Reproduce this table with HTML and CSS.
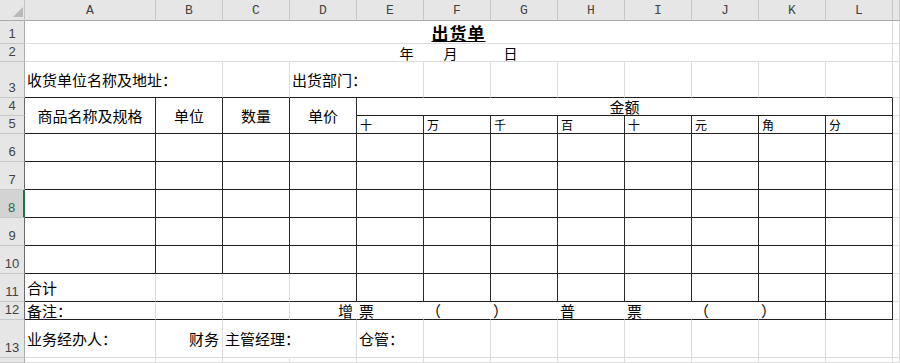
FILE: index.html
```html
<!DOCTYPE html>
<html lang="zh-CN">
<head>
<meta charset="utf-8">
<title>出货单</title>
<link rel="stylesheet" href="styles.css">
</head>
<body>
<div class="sheet">
  <!-- column headers -->
  <div class="c ch corner"><span class="tri"></span></div>
  <div class="c ch">A</div><div class="c ch">B</div><div class="c ch">C</div><div class="c ch">D</div>
  <div class="c ch">E</div><div class="c ch">F</div><div class="c ch">G</div><div class="c ch">H</div>
  <div class="c ch">I</div><div class="c ch">J</div><div class="c ch">K</div><div class="c ch">L</div>
  <div class="c ch"></div>

  <!-- row 1 -->
  <div class="c rh">1</div>
  <div class="c s12 ctr title"><span>出货单</span></div>
  <div class="c"></div>

  <!-- row 2 -->
  <div class="c rh">2</div>
  <div class="c s12 ctr date"><span>年</span><span class="gap1">月</span><span class="gap2">日</span></div>
  <div class="c"></div>

  <!-- row 3 -->
  <div class="c rh">3</div>
  <div class="c s2 b">收货单位名称及地址：</div>
  <div class="c b"></div>
  <div class="c s2 b">出货部门：</div>
  <div class="c b"></div><div class="c b"></div><div class="c b"></div><div class="c b"></div>
  <div class="c b"></div><div class="c b"></div><div class="c b"></div>
  <div class="c"></div>

  <!-- row 4 -->
  <div class="c rh tl">4</div>
  <div class="c rs2 r b ctr">商品名称及规格</div>
  <div class="c rs2 r b ctr">单位</div>
  <div class="c rs2 r b ctr">数量</div>
  <div class="c rs2 r b ctr">单价</div>
  <div class="c s8 r b ctr">金额</div>
  <div class="c"></div>

  <!-- row 5 -->
  <div class="c rh tl">5</div>
  <div class="c r b sm">十</div><div class="c r b sm">万</div><div class="c r b sm">千</div><div class="c r b sm">百</div>
  <div class="c r b sm">十</div><div class="c r b sm">元</div><div class="c r b sm">角</div><div class="c r b sm">分</div>
  <div class="c"></div>

  <!-- rows 6-10 -->
  <div class="c rh tl">6</div>
  <div class="c r b"></div><div class="c r b"></div><div class="c r b"></div><div class="c r b"></div>
  <div class="c r b"></div><div class="c r b"></div><div class="c r b"></div><div class="c r b"></div>
  <div class="c r b"></div><div class="c r b"></div><div class="c r b"></div><div class="c r b"></div>
  <div class="c"></div>

  <div class="c rh tl">7</div>
  <div class="c r b"></div><div class="c r b"></div><div class="c r b"></div><div class="c r b"></div>
  <div class="c r b"></div><div class="c r b"></div><div class="c r b"></div><div class="c r b"></div>
  <div class="c r b"></div><div class="c r b"></div><div class="c r b"></div><div class="c r b"></div>
  <div class="c"></div>

  <div class="c rh sel">8</div>
  <div class="c r b"></div><div class="c r b"></div><div class="c r b"></div><div class="c r b"></div>
  <div class="c r b"></div><div class="c r b"></div><div class="c r b"></div><div class="c r b"></div>
  <div class="c r b"></div><div class="c r b"></div><div class="c r b"></div><div class="c r b"></div>
  <div class="c"></div>

  <div class="c rh tl">9</div>
  <div class="c r b"></div><div class="c r b"></div><div class="c r b"></div><div class="c r b"></div>
  <div class="c r b"></div><div class="c r b"></div><div class="c r b"></div><div class="c r b"></div>
  <div class="c r b"></div><div class="c r b"></div><div class="c r b"></div><div class="c r b"></div>
  <div class="c"></div>

  <div class="c rh tl">10</div>
  <div class="c r b"></div><div class="c r b"></div><div class="c r b"></div><div class="c r b"></div>
  <div class="c r b"></div><div class="c r b"></div><div class="c r b"></div><div class="c r b"></div>
  <div class="c r b"></div><div class="c r b"></div><div class="c r b"></div><div class="c r b"></div>
  <div class="c"></div>

  <!-- row 11 -->
  <div class="c rh tl">11</div>
  <div class="c b">合计</div><div class="c b"></div><div class="c b"></div><div class="c r b"></div>
  <div class="c r b"></div><div class="c r b"></div><div class="c r b"></div><div class="c r b"></div>
  <div class="c r b"></div><div class="c r b"></div><div class="c r b"></div><div class="c r b"></div>
  <div class="c"></div>

  <!-- row 12 -->
  <div class="c rh tl">12</div>
  <div class="c b">备注：</div><div class="c b"></div><div class="c b"></div>
  <div class="c b nr end">增</div>
  <div class="c b nr">票</div>
  <div class="c b nr">（</div>
  <div class="c b nr">）</div>
  <div class="c b nr">普</div>
  <div class="c b nr">票</div>
  <div class="c b nr">（</div>
  <div class="c b r">）</div>
  <div class="c b r"></div>
  <div class="c"></div>

  <!-- row 13 -->
  <div class="c rh">13</div>
  <div class="c">业务经办人：</div>
  <div class="c end">财务</div>
  <div class="c nr">主管经理：</div>
  <div class="c"></div>
  <div class="c">仓管：</div>
  <div class="c"></div><div class="c"></div><div class="c"></div><div class="c"></div>
  <div class="c"></div><div class="c"></div><div class="c"></div>
  <div class="c"></div>

  <!-- row 14 (partial) -->
  <div class="c rh"></div>
  <div class="c"></div><div class="c"></div><div class="c"></div><div class="c"></div>
  <div class="c"></div><div class="c"></div><div class="c"></div><div class="c"></div>
  <div class="c"></div><div class="c"></div><div class="c"></div><div class="c"></div>
  <div class="c"></div>
</div>
</body>
</html>
```

FILE: styles.css
```css
* { box-sizing: border-box; }

html, body {
  margin: 0;
  padding: 0;
  background: #fff;
  overflow: hidden;
}

.sheet {
  display: grid;
  grid-template-columns: 25px 131px repeat(11, 67px) 1fr;
  grid-template-rows: 21px 23px 18px 36px 18px 18px repeat(6, 28px) 18px 38px 1fr;
  width: 900px;
  height: 363px;
  font-family: "Noto Sans CJK SC", "Liberation Sans", sans-serif;
  font-size: 15px;
  color: #000;
}

.c {
  display: flex;
  align-items: center;
  min-width: 0;
  padding: 0 2px;
  white-space: nowrap;
  line-height: 1;
  border-right: 1px solid #dcdcdc;
  border-bottom: 1px solid #dcdcdc;
}

/* headers */
.ch {
  justify-content: center;
  background: #e6e6e6;
  border-right: 1px solid #c8c8c8;
  border-bottom: 1px solid #ababab;
  font-family: "Liberation Mono", monospace;
  font-size: 13px;
  color: #444;
}

.corner {
  justify-content: flex-end;
  align-items: flex-end;
  padding: 0 1px 3px 0;
}

.tri {
  width: 0;
  height: 0;
  border-left: 10px solid transparent;
  border-bottom: 10px solid #b8b8b8;
}

.rh {
  justify-content: center;
  align-items: flex-end;
  overflow: hidden;
  padding: 0 0 3px 0;
  background: #e6e6e6;
  border-right: 1px solid #ababab;
  border-bottom: 1px solid #c8c8c8;
  font-family: "Liberation Sans", sans-serif;
  font-size: 13px;
  color: #444;
}

.rh.tl { border-right-color: #6a6a6a; }

.rh.sel {
  background: #d3d3d3;
  color: #217346;
  border-right: 2px solid #217346;
}

/* spans */
.s2 { grid-column: span 2; }
.s8 { grid-column: span 8; }
.s12 { grid-column: span 12; }
.rs2 { grid-row: span 2; }

/* borders */
.r { border-right-color: #2a2a2a; }
.b { border-bottom-color: #1e1e1e; }
.nr { border-right-color: transparent; }

/* alignment */
.ctr { justify-content: center; }
.end { justify-content: flex-end; padding-right: 3px; }

.sm {
  font-size: 12px;
  padding-left: 3px;
}

.title {
  align-items: flex-start;
  padding-top: 3px;
}

.title span {
  display: inline-block;
  height: 18px;
  line-height: 17px;
  font-size: 17px;
  font-weight: bold;
  letter-spacing: 1px;
  text-decoration: underline;
  text-underline-offset: 1px;
}

.date {
  align-items: flex-end;
  padding-bottom: 1px;
}

.date span {
  display: inline-block;
  line-height: 14px;
  height: 14px;
  font-size: 14px;
}

.gap1 { margin-left: 30px; }
.gap2 { margin-left: 46px; }
```
